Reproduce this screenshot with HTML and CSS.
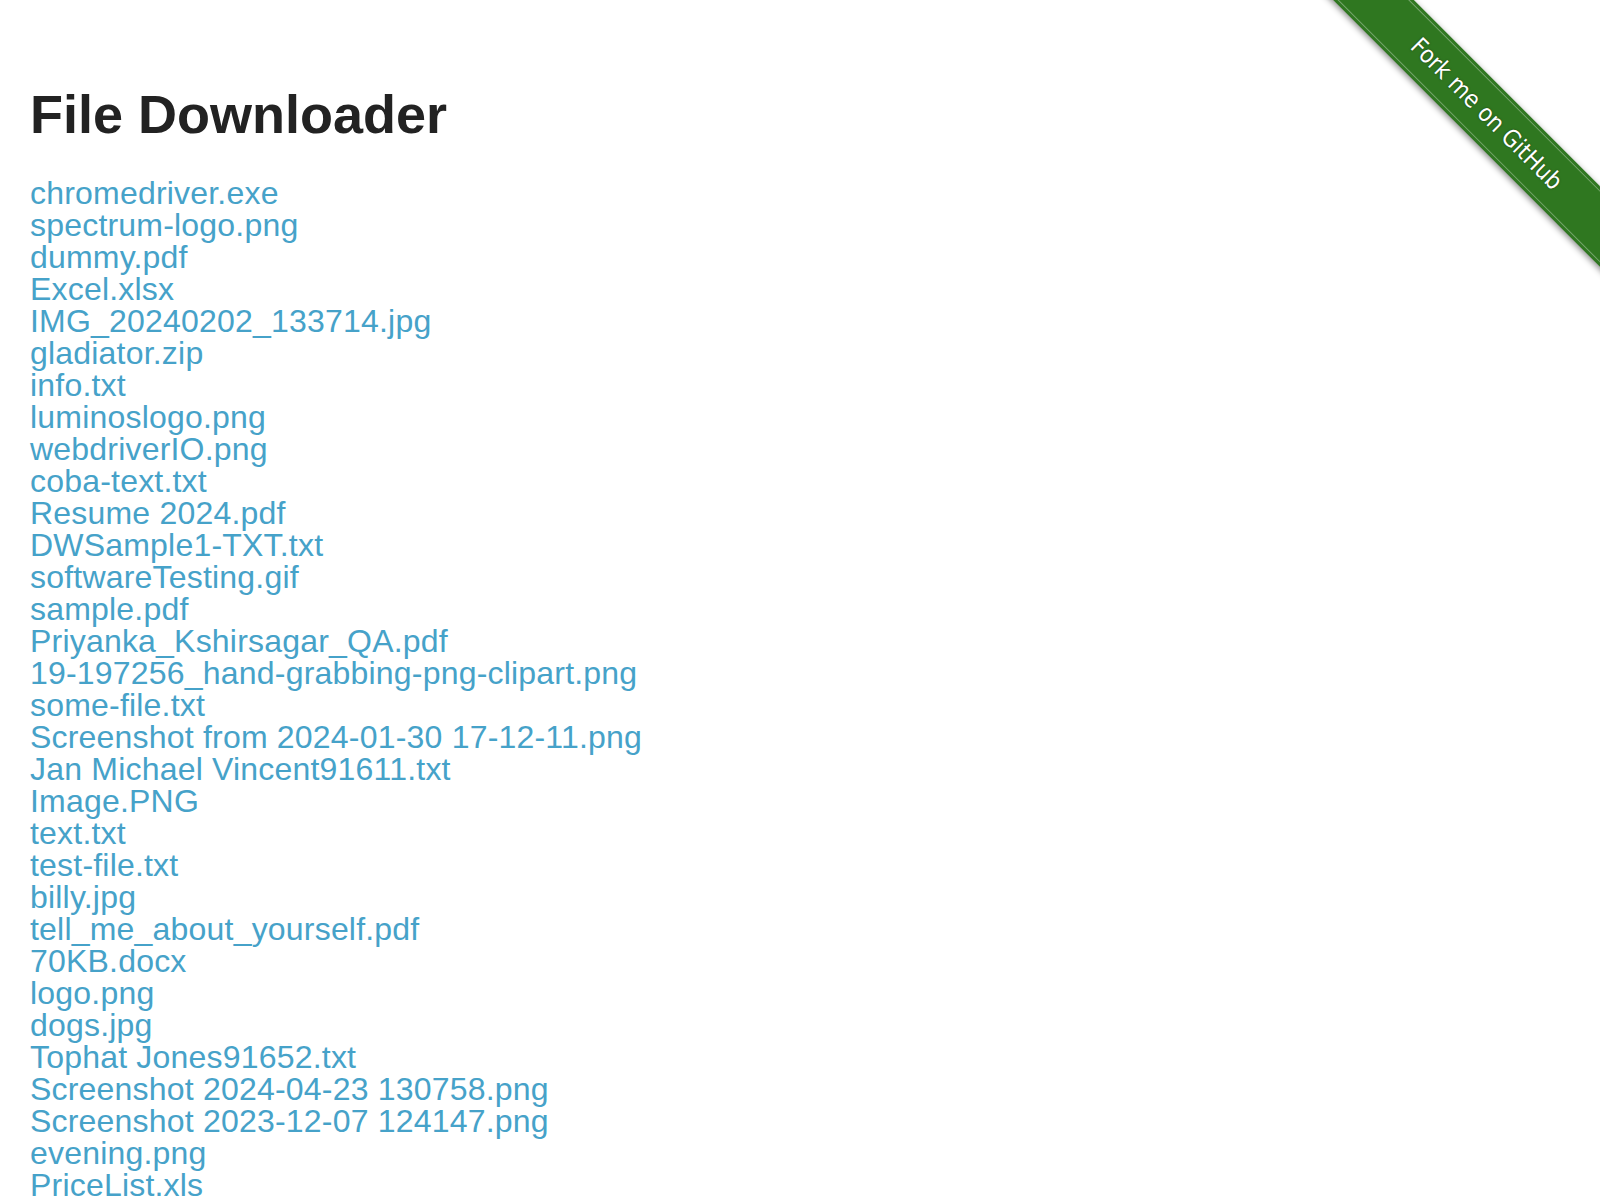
FILE: index.html
```html
<!DOCTYPE html>
<html>
<head>
<meta charset="utf-8">
<title>The Internet</title>
<link rel="stylesheet" href="styles.css">
</head>
<body>
<div class="ribbon-wrap">
  <a class="ribbon" href="#">Fork me on GitHub</a>
</div>
<div class="page">
  <div class="content">
    <h3 class="title">File Downloader</h3>
    <div class="example">
      <a class="file" href="#">chromedriver.exe</a>
      <a class="file" href="#">spectrum-logo.png</a>
      <a class="file" href="#">dummy.pdf</a>
      <a class="file" href="#">Excel.xlsx</a>
      <a class="file" href="#">IMG_20240202_133714.jpg</a>
      <a class="file" href="#">gladiator.zip</a>
      <a class="file" href="#">info.txt</a>
      <a class="file" href="#">luminoslogo.png</a>
      <a class="file" href="#">webdriverIO.png</a>
      <a class="file" href="#">coba-text.txt</a>
      <a class="file" href="#">Resume 2024.pdf</a>
      <a class="file" href="#">DWSample1-TXT.txt</a>
      <a class="file" href="#">softwareTesting.gif</a>
      <a class="file" href="#">sample.pdf</a>
      <a class="file" href="#">Priyanka_Kshirsagar_QA.pdf</a>
      <a class="file" href="#">19-197256_hand-grabbing-png-clipart.png</a>
      <a class="file" href="#">some-file.txt</a>
      <a class="file" href="#">Screenshot from 2024-01-30 17-12-11.png</a>
      <a class="file" href="#">Jan Michael Vincent91611.txt</a>
      <a class="file" href="#">Image.PNG</a>
      <a class="file" href="#">text.txt</a>
      <a class="file" href="#">test-file.txt</a>
      <a class="file" href="#">billy.jpg</a>
      <a class="file" href="#">tell_me_about_yourself.pdf</a>
      <a class="file" href="#">70KB.docx</a>
      <a class="file" href="#">logo.png</a>
      <a class="file" href="#">dogs.jpg</a>
      <a class="file" href="#">Tophat Jones91652.txt</a>
      <a class="file" href="#">Screenshot 2024-04-23 130758.png</a>
      <a class="file" href="#">Screenshot 2023-12-07 124147.png</a>
      <a class="file" href="#">evening.png</a>
      <a class="file" href="#">PriceList.xls</a>
    </div>
  </div>
</div>
</body>
</html>
```
FILE: styles.css
```css
html, body {
  margin: 0;
  padding: 0;
  background: #fff;
}
body {
  font-family: "Liberation Sans", Arial, Helvetica, sans-serif;
  color: #222;
}
.page {
  padding: 0 30px;
}
.content {
  display: flex;
  flex-direction: column;
}
.title {
  margin: 81px 0 0 0;
  font-size: 54px;
  line-height: 66px;
  font-weight: bold;
  color: #222;
}
.example {
  display: flex;
  flex-direction: column;
  align-items: flex-start;
  margin-top: 30px;
}
.file {
  font-size: 32px;
  line-height: 32px;
  letter-spacing: 0.2px;
  color: #46a2c9;
  text-decoration: none;
  white-space: nowrap;
}
.ribbon-wrap {
  position: absolute;
  top: 0;
  right: 0;
  width: 300px;
  height: 300px;
  overflow: hidden;
}
.ribbon {
  position: absolute;
  left: -63px;
  top: 85px;
  width: 500px;
  height: 57px;
  box-sizing: border-box;
  background: #2f7720;
  transform: rotate(45deg);
  display: flex;
  align-items: center;
  justify-content: center;
  color: #fff;
  text-decoration: none;
  font-family: "DejaVu Sans Condensed", "DejaVu Sans", sans-serif;
  font-size: 24px;
  text-shadow: 0 0 2px rgba(0,0,0,0.5);
  box-shadow: 0 2px 6px rgba(0,0,0,0.45);
}
.ribbon::before,
.ribbon::after {
  content: "";
  position: absolute;
  left: 0;
  right: 0;
  height: 1px;
  background: rgba(255,255,255,0.35);
}
.ribbon::before { top: 3px; }
.ribbon::after { bottom: 3px; }
```
